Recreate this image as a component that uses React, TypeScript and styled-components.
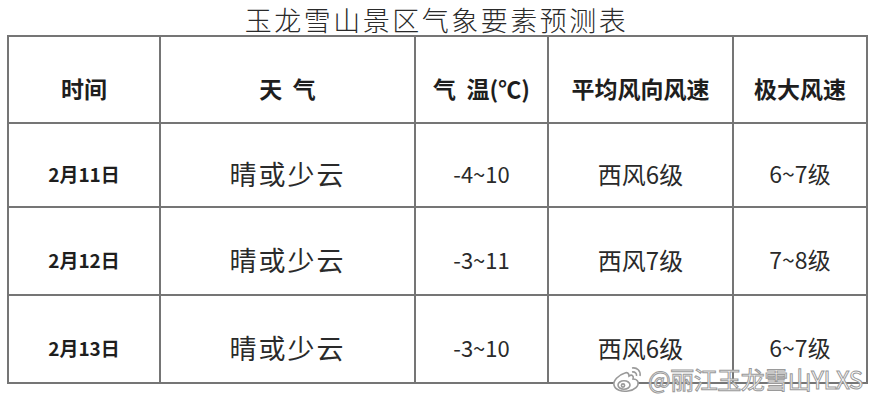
import React from "react";
import styled, { createGlobalStyle } from "styled-components";

type Row = {
  date: string;
  weather: string;
  temp: string;
  wind: string;
  gust: string;
  height: number;
};

const rows: Row[] = [
  { date: "2月11日", weather: "晴或少云", temp: "-4~10", wind: "西风6级", gust: "6~7级", height: 84 },
  { date: "2月12日", weather: "晴或少云", temp: "-3~11", wind: "西风7级", gust: "7~8级", height: 88 },
  { date: "2月13日", weather: "晴或少云", temp: "-3~10", wind: "西风6级", gust: "6~7级", height: 88 },
];

const columns = [152, 255, 133, 185, 134];

const GlobalStyle = createGlobalStyle`
  body {
    margin: 0;
    background: #ffffff;
    font-family: "Noto Sans CJK SC", "Noto Sans", sans-serif;
    color: #222222;
  }
`;

const App: React.FC = () => {
  return (
    <Page>
      <GlobalStyle />
      <Title>玉龙雪山景区气象要素预测表</Title>
      <Table>
        <colgroup>
          {columns.map((w, idx) => (
            <col key={idx} style={{ width: w }} />
          ))}
        </colgroup>
        <thead>
          <tr style={{ height: 87 }}>
            <Head>时间</Head>
            <Head>天&nbsp;&nbsp;气</Head>
            <Head>气&nbsp;&nbsp;温(℃)</Head>
            <Head>平均风向风速</Head>
            <Head>极大风速</Head>
          </tr>
        </thead>
        <tbody>
          {rows.map((row, idx) => (
            <tr key={idx} style={{ height: row.height }}>
              <DateCell>{row.date}</DateCell>
              <Cell $size={27} $spacing={2}>
                {row.weather}
              </Cell>
              <Cell $size={22}>{row.temp}</Cell>
              <Cell $size={24}>{row.wind}</Cell>
              <Cell $size={23}>{row.gust}</Cell>
            </tr>
          ))}
        </tbody>
      </Table>
      <Watermark>
        <WeiboLogo />
        <WatermarkText>@丽江玉龙雪山YLXS</WatermarkText>
      </Watermark>
    </Page>
  );
};

const WeiboLogo: React.FC = () => (
  <svg width="32" height="28" viewBox="0 0 32 28">
    <g fill="#ffffff" stroke="#9a9a9a" strokeWidth="1.6">
      <path d="M13 8 C6 10 1 16 2 20 C3 25 10 27 16 26 C23 25 27 21 26 17 C25 14 21 14 21 14 C22 11 20 9 17 11 C17 8 15 7 13 8 Z" />
      <ellipse cx="12" cy="20" rx="6" ry="4.2" />
      <circle cx="11" cy="20.5" r="1.6" />
      <path d="M20 3 C25 2 29 6 28 11" fill="none" />
      <path d="M20 7 C23 6.5 25 8.5 24.5 11" fill="none" />
    </g>
  </svg>
);

const Page = styled.div`
  position: relative;
  width: 873px;
  height: 400px;
  overflow: hidden;
`;

const Title = styled.h1`
  margin: 0;
  height: 35px;
  padding-top: 4px;
  box-sizing: border-box;
  text-align: center;
  font-size: 27px;
  line-height: 31px;
  font-weight: 300;
  letter-spacing: 2.5px;
  color: #2a2a2a;
`;

const Table = styled.table`
  margin-left: 7px;
  width: 859px;
  table-layout: fixed;
  border-collapse: collapse;
  border: 2px solid #757575;
`;

const Head = styled.th`
  border: 2px solid #757575;
  padding: 16px 0 0;
  text-align: center;
  vertical-align: middle;
  font-size: 23px;
  font-weight: 700;
  color: #1e1e1e;
  white-space: nowrap;
`;

const DateCell = styled.td`
  border: 2px solid #757575;
  padding: 16px 0 0;
  text-align: center;
  vertical-align: middle;
  font-size: 19px;
  font-weight: 700;
  color: #1e1e1e;
`;

const Cell = styled.td<{ $size: number; $spacing?: number }>`
  border: 2px solid #757575;
  padding: 16px 0 0;
  text-align: center;
  vertical-align: middle;
  font-size: ${(p) => p.$size}px;
  letter-spacing: ${(p) => p.$spacing ?? 0}px;
  font-weight: 400;
  color: #2a2a2a;
  white-space: nowrap;
`;

const Watermark = styled.div`
  position: absolute;
  left: 612px;
  top: 364px;
  display: flex;
  align-items: center;
  gap: 4px;
`;

const WatermarkText = styled.span`
  font-family: "Noto Sans CJK SC", "Noto Sans", sans-serif;
  font-size: 24px;
  line-height: 30px;
  color: #ffffff;
  -webkit-text-stroke: 1px #9a9a9a;
  letter-spacing: -0.5px;
`;

export default App;
